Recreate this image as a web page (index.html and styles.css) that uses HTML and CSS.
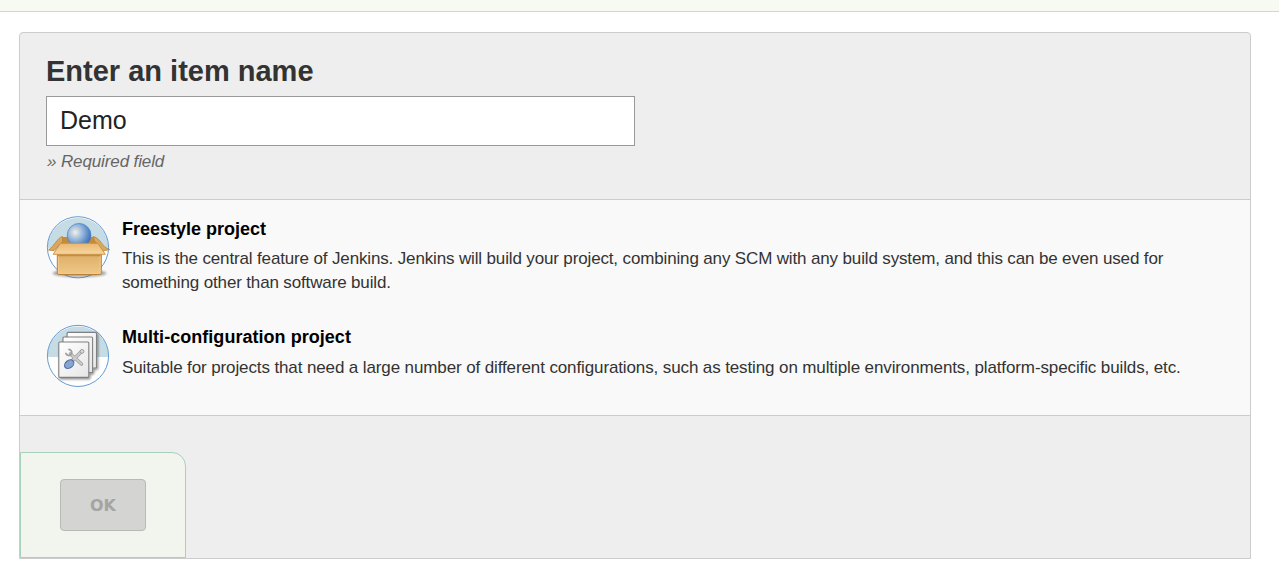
FILE: index.html
```html
<!DOCTYPE html>
<html lang="en">
<head>
<meta charset="utf-8">
<title>New Item</title>
<link rel="stylesheet" href="styles.css">
</head>
<body>
<div class="breadcrumbs"></div>
<form class="new-item">
  <section class="name-section">
    <h1 class="title">Enter an item name</h1>
    <input class="name-input" type="text" value="Demo" aria-label="Item name">
    <p class="required"><span class="mark">»</span> Required field</p>
  </section>
  <ul class="types">
    <li class="type">
      <svg class="icon" viewBox="5 4 68 68" aria-hidden="true">
        <defs>
          <radialGradient id="ball" cx="0.34" cy="0.38" r="0.75"><stop offset="0" stop-color="#f3f1e2"/><stop offset="0.35" stop-color="#a5c0df"/><stop offset="0.75" stop-color="#5688c6"/><stop offset="1" stop-color="#3567ac"/></radialGradient>
          <linearGradient id="front" x1="0" y1="0" x2="0" y2="1"><stop offset="0" stop-color="#cf9a4c"/><stop offset="0.3" stop-color="#e0b26c"/><stop offset="1" stop-color="#f0c888"/></linearGradient>
          <linearGradient id="flap" x1="0" y1="0" x2="0" y2="1"><stop offset="0" stop-color="#e9b872"/><stop offset="1" stop-color="#f8d7a0"/></linearGradient>
          <filter id="soft" x="-20%" y="-100%" width="140%" height="300%"><feGaussianBlur stdDeviation="1.3"/></filter>
        </defs>
        <circle cx="38" cy="37.3" r="30.6" fill="#fff"/>
        <path d="M7.4 38.5a30.6 30.6 0 1 1 61.2 0z" fill="#c5dce4"/>
        <circle cx="38" cy="37.3" r="30.6" fill="none" stroke="#659bd3"/>
        <ellipse cx="39.5" cy="63.2" rx="27" ry="3.8" fill="#555" opacity=".5" filter="url(#soft)"/>
        <path d="M22 27h34l2 9H18z" fill="#c68a3a"/>
        <path d="M22.5 26.5C17 28 14.500 36 8.500 40l5.500 .7 8.500-9zM53 26.500c8 1.500 8.500 10.500 16.700 13l-7 1.600-8-10z" fill="#daa75d" stroke="#b98338" stroke-width=".8"/>
        <circle cx="39.1" cy="25.3" r="11.9" fill="url(#ball)" stroke="#4c80c2" stroke-width=".7"/>
        <rect x="17.3" y="39.5" width="44" height="25" rx="1.8" fill="url(#front)" stroke="#b9803a"/>
        <path d="M18.5 44v19.4h41.6V44" fill="none" stroke="#f5cc8c" stroke-width=".8"/>
        <path d="M18 45.4h42.6" stroke="#c18d45" stroke-width="1.5"/>
        <path d="M20.4 33.3h37.4l7.5 11H13.2z" fill="url(#flap)" stroke="#c78e40" stroke-width=".9" stroke-linejoin="round"/>
      </svg>
      <div class="body">
        <h2 class="name">Freestyle project</h2>
        <p class="desc">This is the central feature of Jenkins. Jenkins will build your project, combining any SCM with any build system, and this can be even used for something other than software build.</p>
      </div>
    </li>
    <li class="type">
      <svg class="icon" viewBox="5 4 68 68" aria-hidden="true">
        <defs>
          <linearGradient id="paper" x1="0" y1="0" x2="1" y2="1"><stop offset="0" stop-color="#fff"/><stop offset="1" stop-color="#e6e6e6"/></linearGradient>
          <filter id="shade" x="-10%" y="-10%" width="130%" height="130%"><feDropShadow dx="1.2" dy="1.4" stdDeviation="1" flood-opacity=".45"/></filter>
        </defs>
        <circle cx="38" cy="37.9" r="30.6" fill="#fff"/>
        <path d="M7.4 39a30.6 30.6 0 1 1 61.2 0z" fill="#c5dce4"/>
        <circle cx="38" cy="37.9" r="30.6" fill="none" stroke="#659bd3"/>
        <g fill="url(#paper)" stroke="#808080" stroke-width="1.1" filter="url(#shade)">
          <rect x="27.1" y="14.4" width="29.4" height="35.6" rx="1"/>
          <rect x="23" y="19" width="29.6" height="35.6" rx="1"/>
          <rect x="18.8" y="24" width="30" height="35.4" rx="1"/>
        </g>
        <path d="m30.500 36 11 10M40.500 34.500 31 44" fill="none" stroke="#a2a2a2" stroke-width="3.6" stroke-linecap="round"/>
        <path d="m30.500 36 11 10M40.500 34.500 31 44" fill="none" stroke="#ccc" stroke-width="1.8" stroke-linecap="round"/>
        <path d="M29 31.400c2.800 1 3.600 3.200 2.100 5s-4 1.400-5.200-.9" fill="none" stroke="#a0a0a0" stroke-width="1.7" stroke-linecap="round"/>
        <circle cx="42" cy="33.4" r="1.9" fill="#ddd" stroke="#999"/>
        <ellipse cx="29.2" cy="46.2" rx="5.1" ry="3.7" transform="rotate(-38 29.2 46.2)" fill="#87a5d0" stroke="#4a6a9c" stroke-width="1.1"/>
      </svg>
      <div class="body">
        <h2 class="name name-wide">Multi-configuration project</h2>
        <p class="desc desc-low">Suitable for projects that need a large number of different configurations, such as testing on multiple environments, platform-specific builds, etc.</p>
      </div>
    </li>
  </ul>
  <footer class="footer">
    <div class="button-tray"><button class="ok" type="button" disabled>OK</button></div>
  </footer>
</form>
</body>
</html>
```
FILE: styles.css
```css
* { box-sizing: border-box; }
body { margin: 0; background: #fff; color: #333; font-family: "Liberation Sans", Arial, sans-serif; }
.breadcrumbs { height: 12px; background: #f7faf3; border-bottom: 1px solid #d3d6cf; }
.new-item { width: 1232px; height: 527px; margin: 20px 0 0 19px; border: 1px solid #ccc; border-radius: 4px 4px 0 0; background: #eee; display: flex; flex-direction: column; }
.name-section { height: 166px; padding: 20px 26px 0; }
.title { margin: 0; font-size: 29px; line-height: 36px; height: 43px; }
.name-input { display: block; width: 589px; height: 50px; padding: 0 13px 2px; border: 1px solid #999; border-radius: 0; background: #fff; color: #222; font: 25px "Liberation Sans", Arial, sans-serif; }
.required { margin: 6px 0 0 1px; font-size: 17px; line-height: 20px; font-style: italic; color: #666; letter-spacing: -0.12px; }
.types { list-style: none; margin: 0; padding: 15px 26px 0; height: 217px; background: #f9f9f9; border-top: 1px solid #ccc; border-bottom: 1px solid #ccc; }
.type { display: flex; height: 109px; gap: 9px; }
.icon { width: 68px; height: 68px; margin: -1px 0 0 -1px; flex: none; }
.type + .type .icon { margin-top: -2px; }
.body { flex: 1; padding-top: 2px; }
.type + .type .body { padding-top: 1px; }
.name { margin: 0; font-size: 18px; line-height: 24px; color: #000; }
.name-wide { letter-spacing: 0.035px; }
.desc { margin: 6px 0 0; font-size: 17px; line-height: 24px; width: 1070px; letter-spacing: -0.146px; }
.desc-low { margin-top: 7px; letter-spacing: -0.117px; }
.footer { flex: 1; display: flex; align-items: flex-end; }
.button-tray { width: 166px; height: 106px; padding: 26px 39px; background: #f2f5ee; border: 1px solid #a9cfbd; border-radius: 0 14px 0 0; }
.ok { width: 86px; height: 52px; border: 1px solid #b7bab5; border-radius: 4px; background: #d4d4d2; color: #a4a5a3; font: bold 16px "DejaVu Sans", sans-serif; }
```
